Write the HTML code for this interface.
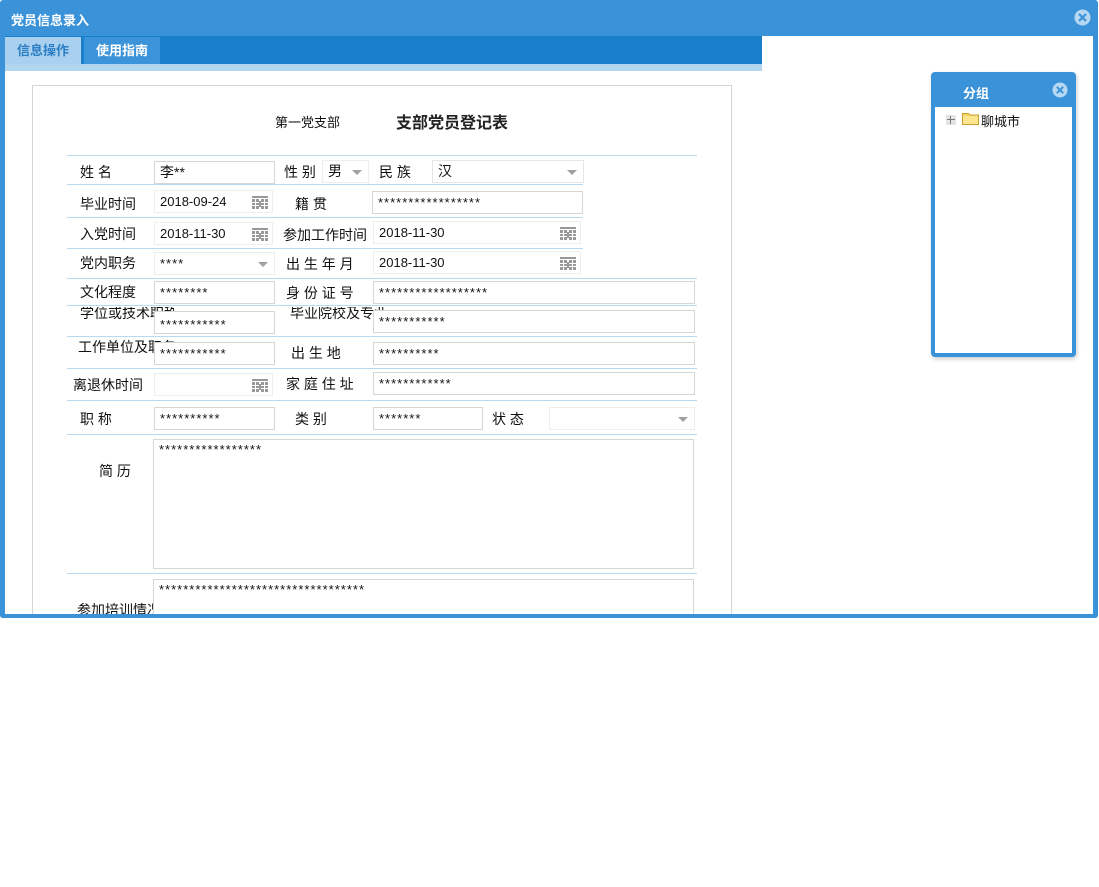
<!DOCTYPE html>
<html><head><meta charset="utf-8"><style>
*{margin:0;padding:0;box-sizing:border-box}
body{width:1099px;height:887px;background:#fff;position:relative;overflow:hidden;font-family:"Liberation Sans","Noto Sans CJK SC","WenQuanYi Zen Hei",sans-serif;}
.a{position:absolute}
.win{left:0;top:0;width:1098px;height:618px;background:#3a92d8;border-radius:3px}
.title{left:11px;top:10px;color:#fff;font-weight:bold;font-size:13px}
.body{left:5px;top:36px;width:1088px;height:578px;background:#fff}
.tabbar{left:5px;top:36px;width:757px;height:28px;background:#1a7fcb}
.strip{left:5px;top:64px;width:757px;height:7px;background:#b3d6f0}
.tab{top:37px;height:27px;font-size:13px;font-weight:bold;text-align:center;line-height:27px}
.form{left:32px;top:85px;width:700px;height:529px;border:1px solid #d4d4d4;border-bottom:none}
.ln{height:1px;background:#b8d9f0}
.lb{font-size:14px;color:#111;white-space:nowrap;line-height:16px}
.in{border:1px solid #d6d6d6;height:23px;background:#fff;font-size:13px;line-height:21px;padding-left:5px;color:#111;white-space:nowrap;overflow:hidden}
.cal{position:absolute;right:4px;top:5px}
.dd{position:absolute;right:6px;top:9px;width:0;height:0;border-left:5px solid transparent;border-right:5px solid transparent;border-top:5px solid #a0a0a0}
.st{letter-spacing:1px;font-size:13px}
</style></head><body>
<svg width="0" height="0" style="position:absolute"><defs><g id="c" fill="#999"><rect x="0" y="0" width="16" height="2"/><rect x="0" y="3" width="3" height="3"/><rect x="4" y="3" width="3" height="3"/><rect x="9" y="3" width="3" height="3"/><rect x="13" y="3" width="3" height="3"/><rect x="0" y="7" width="3" height="2"/><rect x="4" y="7" width="3" height="2"/><rect x="9" y="7" width="3" height="2"/><rect x="13" y="7" width="3" height="2"/><rect x="0" y="10" width="3" height="3"/><rect x="4" y="10" width="3" height="3"/><rect x="9" y="10" width="3" height="3"/><rect x="13" y="10" width="3" height="3"/><rect x="7" y="5" width="2" height="6"/></g></defs></svg>
<div class="a win"></div>
<div class="a title">党员信息录入</div>
<svg class="a" style="left:1074px;top:9px" width="17" height="17" viewBox="0 0 17 17"><circle cx="8.5" cy="8.5" r="8" fill="#b7d8f2"/><path d="M5 5L12 12M12 5L5 12" stroke="#3a92d8" stroke-width="2.2"/></svg>
<div class="a body"></div>
<div class="a tabbar"></div>
<div class="a tab" style="left:5px;width:76px;background:#a9d0ee;color:#2b7dc4">信息操作</div>
<div class="a tab" style="left:84px;width:76px;background:#3b94d9;color:#fff">使用指南</div>
<div class="a strip"></div>
<div class="a form"></div>
<div class="a lb" style="left:275px;top:115px;font-size:13px">第一党支部</div>
<div class="a lb" style="left:396px;top:116px;font-size:16px;font-weight:bold;color:#222">支部党员登记表</div>

<div class="a ln" style="left:67px;top:155px;width:630px"></div>
<div class="a ln" style="left:67px;top:184px;width:516px"></div>
<div class="a ln" style="left:67px;top:217px;width:516px"></div>
<div class="a ln" style="left:67px;top:248px;width:516px"></div>
<div class="a ln" style="left:67px;top:278px;width:630px"></div>
<div class="a ln" style="left:67px;top:305px;width:630px"></div>
<div class="a ln" style="left:67px;top:336px;width:630px"></div>
<div class="a ln" style="left:67px;top:368px;width:630px"></div>
<div class="a ln" style="left:67px;top:400px;width:630px"></div>
<div class="a ln" style="left:67px;top:434px;width:630px"></div>
<div class="a ln" style="left:67px;top:573px;width:630px"></div>

<div class="a lb" style="left:80px;top:164px">姓&nbsp;名</div>
<div class="a in" style="left:154px;top:161px;width:121px;font-size:14px">李**</div>
<div class="a lb" style="left:284px;top:164px">性&nbsp;别</div>
<div class="a in" style="left:322px;top:160px;width:47px;border-color:#eee;font-size:14px">男<span class="dd"></span></div>
<div class="a lb" style="left:379px;top:164px">民&nbsp;族</div>
<div class="a in" style="left:432px;top:160px;width:152px;border-color:#e6e6e6;font-size:14px">汉<span class="dd"></span></div>

<div class="a lb" style="left:80px;top:196px">毕业时间</div>
<div class="a in" style="left:154px;top:190px;width:119px;border-color:#eee">2018-09-24<svg class="cal" width="16" height="13"><use href="#c"/></svg></div>
<div class="a lb" style="left:295px;top:196px">籍&nbsp;贯</div>
<div class="a in st" style="left:372px;top:191px;width:211px">*****************</div>

<div class="a lb" style="left:80px;top:226px">入党时间</div>
<div class="a in" style="left:154px;top:222px;width:119px;border-color:#eee">2018-11-30<svg class="cal" width="16" height="13"><use href="#c"/></svg></div>
<div class="a lb" style="left:283px;top:227px">参加工作时间</div>
<div class="a in" style="left:373px;top:221px;width:208px;border-color:#eee">2018-11-30<svg class="cal" width="16" height="13"><use href="#c"/></svg></div>

<div class="a lb" style="left:80px;top:255px">党内职务</div>
<div class="a in st" style="left:154px;top:252px;width:121px;border-color:#eee">****<span class="dd"></span></div>
<div class="a lb" style="left:286px;top:256px">出&nbsp;生&nbsp;年&nbsp;月</div>
<div class="a in" style="left:373px;top:251px;width:208px;border-color:#eee">2018-11-30<svg class="cal" width="16" height="13"><use href="#c"/></svg></div>

<div class="a lb" style="left:80px;top:284px">文化程度</div>
<div class="a in st" style="left:154px;top:281px;width:121px">********</div>
<div class="a lb" style="left:286px;top:285px">身&nbsp;份&nbsp;证&nbsp;号</div>
<div class="a in st" style="left:373px;top:281px;width:322px">******************</div>

<div class="a lb" style="left:80px;top:307px;width:94px;overflow:hidden;height:13px;line-height:13px">学位或技术职称</div>
<div class="a in st" style="left:154px;top:311px;width:121px;padding-top:2px">***********</div>
<div class="a lb" style="left:290px;top:307px;width:94px;overflow:hidden;height:13px;line-height:13px">毕业院校及专业</div>
<div class="a in st" style="left:373px;top:310px;width:322px">***********</div>

<div class="a lb" style="left:78px;top:339px;width:96px;overflow:hidden;height:14px">工作单位及职务</div>
<div class="a in st" style="left:154px;top:342px;width:121px">***********</div>
<div class="a lb" style="left:291px;top:345px">出&nbsp;生&nbsp;地</div>
<div class="a in st" style="left:373px;top:342px;width:322px">**********</div>

<div class="a lb" style="left:73px;top:377px">离退休时间</div>
<div class="a in" style="left:154px;top:373px;width:119px;border-color:#eee"><svg class="cal" width="16" height="13"><use href="#c"/></svg></div>
<div class="a lb" style="left:286px;top:376px">家&nbsp;庭&nbsp;住&nbsp;址</div>
<div class="a in st" style="left:373px;top:372px;width:322px">************</div>

<div class="a lb" style="left:80px;top:411px">职&nbsp;称</div>
<div class="a in st" style="left:154px;top:407px;width:121px">**********</div>
<div class="a lb" style="left:295px;top:411px">类&nbsp;别</div>
<div class="a in st" style="left:373px;top:407px;width:110px">*******</div>
<div class="a lb" style="left:492px;top:411px">状&nbsp;态</div>
<div class="a in" style="left:549px;top:407px;width:146px;border-color:#eee"><span class="dd"></span></div>

<div class="a lb" style="left:99px;top:463px">简&nbsp;历</div>
<div class="a in st" style="left:153px;top:439px;width:541px;height:130px;line-height:20px">*****************</div>
<div class="a lb" style="left:77px;top:602px;width:76px;overflow:hidden;height:12px">参加培训情况</div>
<div class="a in st" style="left:153px;top:579px;width:541px;height:35px;line-height:20px;border-bottom:none">**********************************</div>

<div class="a" style="left:0;top:614px;width:1098px;height:4px;background:#3a92d8;border-radius:0 0 3px 3px"></div>

<div class="a" style="left:931px;top:72px;width:145px;height:285px;background:#3a92d8;border-radius:4px;box-shadow:1px 2px 4px rgba(0,0,0,.2)"></div>
<div class="a" style="left:935px;top:107px;width:137px;height:246px;background:#fff"></div>
<div class="a" style="left:963px;top:83px;color:#fff;font-weight:bold;font-size:13px">分组</div>
<svg class="a" style="left:1052px;top:82px" width="16" height="16" viewBox="0 0 16 16"><circle cx="8" cy="8" r="7.5" fill="#b7d8f2"/><path d="M4.8 4.8L11.2 11.2M11.2 4.8L4.8 11.2" stroke="#3a92d8" stroke-width="2"/></svg>
<div class="a" style="left:946px;top:115px;width:10px;height:10px;background:#e4e4e4"></div>
<div class="a" style="left:947px;top:119px;width:8px;height:1px;background:#777"></div>
<div class="a" style="left:950px;top:116px;width:1px;height:8px;background:#777"></div>
<svg class="a" style="left:962px;top:111px" width="17" height="14" viewBox="0 0 17 14"><path d="M0.5 2.5h6l1.5 1.5h8.5v9.5h-16z" fill="#f5d46a" stroke="#c9a030"/><rect x="1" y="5" width="15" height="8" fill="#fbe58e"/></svg>
<div class="a" style="left:981px;top:111px;font-size:13px;color:#111">聊城市</div>
</body></html>
